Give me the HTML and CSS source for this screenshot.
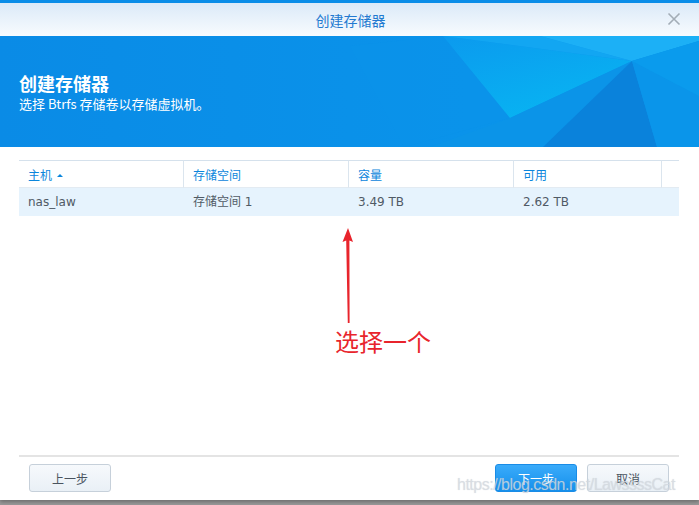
FILE: index.html
```html
<!DOCTYPE html>
<html lang="zh-CN">
<head>
    <meta charset="UTF-8">
    <title>创建存储器</title>
    <link rel="stylesheet" href="styles.css">
</head>
<body>
    <div class="dialog">
        <div class="topline"></div>
        <div class="titlebar">
            <span class="title">创建存储器</span>
            <svg class="close" width="14" height="14" viewBox="0 0 14 14">
                <path d="M1.5 1.5 L12.5 12.5 M12.5 1.5 L1.5 12.5" stroke="#a3adb6" stroke-width="1.6" fill="none"/>
            </svg>
        </div>

        <div class="banner">
            <!-- background pattern -->
            <svg class="banner-bg" width="699" height="111" viewBox="0 0 699 111" preserveAspectRatio="none">
                <defs>
                    <linearGradient id="base" x1="0" y1="0" x2="1" y2="0">
                        <stop offset="0" stop-color="#0a8be6"/>
                        <stop offset="1" stop-color="#0a97ec"/>
                    </linearGradient>
                    <linearGradient id="cyan" x1="0" y1="0" x2="0.6" y2="1">
                        <stop offset="0" stop-color="#0b9aee"/>
                        <stop offset="1" stop-color="#08b4f2"/>
                    </linearGradient>
                </defs>
                <rect width="699" height="111" fill="url(#base)"/>
                <polygon points="350,10 443,0 510,82 404,111" fill="#0a92ea" opacity="0.6"/>
                <polygon points="443,0 632,25 510,82" fill="url(#cyan)"/>
                <polygon points="443,0 540,0 632,25" fill="#12a6f2"/>
                <polygon points="540,0 699,0 699,5 632,25" fill="#1cb0f6"/>
                <polygon points="510,82 632,25 543,111 430,111" fill="#0b94e8"/>
                <polygon points="632,25 657,111 543,111" fill="#0a82db"/>
                <polygon points="632,25 699,5 699,111 657,111" fill="#0a95ea"/>
                <polygon points="632,25 699,5 699,60" fill="#0a9eee" opacity="0.7"/>
            </svg>
            <div class="banner-text">
                <h1>创建存储器</h1>
                <p>选择 Btrfs 存储卷以存储虚拟机。</p>
            </div>
        </div>

        <div class="content">
            <div class="grid">
                <div class="th">主机 <span class="sort"></span></div>
                <div class="th">存储空间</div>
                <div class="th">容量</div>
                <div class="th">可用</div>
                <div class="th last"></div>

                <div class="td">nas_law</div>
                <div class="td">存储空间 1</div>
                <div class="td">3.49 TB</div>
                <div class="td">2.62 TB</div>
                <div class="td"></div>
            </div>

            <!-- red annotation -->
            <svg class="arrow" width="20" height="100" viewBox="0 0 20 100">
                <polygon points="10,0 4.5,14 8.2,12.5 9.8,95 11.6,95 11.4,12.5 15,14" fill="#e8242c"/>
            </svg>
            <div class="note">选择一个</div>
        </div>

        <div class="footer">
            <button class="btn">上一步</button>
            <div class="right">
                <button class="btn primary">下一步</button>
                <button class="btn">取消</button>
            </div>
        </div>
    </div>
    <div class="watermark">https://blog.csdn.net/LawssssCat</div>
</body>
</html>
```

FILE: styles.css
```css
body {
    margin: 0;
    width: 699px;
    height: 505px;
    overflow: hidden;
    background: #9a9a9a;
    font-family: "DejaVu Sans", "Noto Sans CJK SC", sans-serif;
    position: relative;
}
.dialog {
    height: 500px;
    background: white;
    display: flex;
    flex-direction: column;
    box-shadow: 0 2px 4px rgba(0, 0, 0, 0.3);
}
.topline {
    height: 3px;
    background: #0a8de8;
}
.titlebar {
    height: 33px;
    background: linear-gradient(#dbeaf8, #f8fbfe);
    display: flex;
    justify-content: center;
    align-items: center;
    position: relative;
}
.title {
    font-family: "Noto Sans CJK SC", sans-serif;
    font-size: 14px;
    color: #2279d0;
    margin-left: 2px;
}
.close {
    position: absolute;
    right: 18px;
    top: 9px;
}
.banner {
    height: 111px;
    position: relative;
    overflow: hidden;
}
.banner-bg {
    position: absolute;
    left: 0;
    top: 0;
}
.banner-text {
    position: relative;
    padding: 35px 0 0 19px;
    color: white;
    font-family: "Noto Sans CJK SC", sans-serif;
}
.banner-text h1 {
    margin: 0;
    font-size: 18px;
    line-height: 24px;
    font-weight: bold;
}
.banner-text p {
    margin: 0;
    font-size: 13px;
    line-height: 18px;
}
.content {
    flex: 1;
    padding: 13px 20px 0 19px;
    position: relative;
}
.grid {
    display: grid;
    grid-template-columns: 165px 165px 165px 148px 1fr;
    font-size: 12px;
}
.th {
    height: 26px;
    line-height: 27px;
    padding-left: 9px;
    color: #0b86dc;
    border-top: 1px solid #d5e1ec;
    border-bottom: 1px solid #e3ebf2;
    border-right: 1px solid #dbe5ee;
    font-family: "Noto Sans CJK SC", sans-serif;
}
.th.last {
    border-right: none;
}
.sort {
    display: inline-block;
    width: 0;
    height: 0;
    border-left: 3px solid transparent;
    border-right: 3px solid transparent;
    border-bottom: 3px solid #0b86dc;
    vertical-align: middle;
    margin-left: 2px;
    margin-bottom: 2px;
}
.td {
    height: 28px;
    line-height: 28px;
    padding-left: 9px;
    background: #e6f3fd;
    color: #505a65;
}
.arrow {
    position: absolute;
    left: 338px;
    top: 81px;
}
.note {
    position: absolute;
    left: 335px;
    top: 178px;
    font-family: "Noto Sans CJK SC", sans-serif;
    font-size: 24px;
    color: #e8242c;
    line-height: 32px;
}
.footer {
    height: 36px;
    margin: 0 20px 0 19px;
    border-top: 2px solid #e4e4e4;
    padding: 7px 10px 0;
    display: flex;
    justify-content: space-between;
}
.right {
    display: flex;
    gap: 10px;
}
.btn {
    width: 82px;
    height: 28px;
    font-family: "Noto Sans CJK SC", sans-serif;
    font-size: 12px;
    color: #4a545f;
    background: linear-gradient(#f6f9fc, #e9f0f6);
    border: 1px solid #c6d0da;
    border-radius: 3px;
    padding: 0;
}
.btn.primary {
    color: white;
    background: linear-gradient(#3aabfa, #1590ec);
    border-color: #1a8ce6;
}
.watermark {
    position: absolute;
    left: 457px;
    top: 476px;
    font-family: "Liberation Sans", sans-serif;
    font-size: 16px;
    letter-spacing: -0.5px;
    color: rgba(215, 220, 226, 0.75);
    text-shadow: 0 0 1px rgba(160, 170, 180, 0.4);
}
```
